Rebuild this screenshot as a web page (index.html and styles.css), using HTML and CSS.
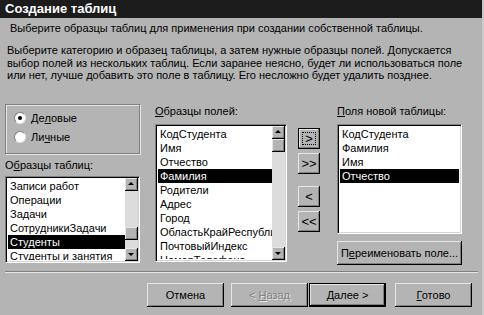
FILE: index.html
```html
<!DOCTYPE html>
<html lang="ru">
<head>
    <meta charset="UTF-8">
    <title>Создание таблиц</title>
    <link rel="stylesheet" href="styles.css">
</head>
<body>
    <div class="window">
        <div class="title">Создание таблиц</div>
        <p class="intro">Выберите образцы таблиц для применения при создании собственной таблицы.</p>
        <p class="desc">Выберите категорию и образец таблицы, а затем нужные образцы полей. Допускается выбор полей из нескольких таблиц. Если заранее неясно, будет ли использоваться поле или нет, лучше добавить это поле в таблицу. Его несложно будет удалить позднее.</p>

        <div class="main">
            <div class="col-left">
                <div class="group">
                    <div class="radio-row"><span class="radio checked"></span>Де<u>л</u>овые</div>
                    <div class="radio-row"><span class="radio"></span>Ли<u>ч</u>ные</div>
                </div>
                <div class="label label-tables">О<u>б</u>разцы таблиц:</div>
                <div class="listbox list-tables">
                    <ul class="items">
                        <li>Записи работ</li>
                        <li>Операции</li>
                        <li>Задачи</li>
                        <li>СотрудникиЗадачи</li>
                        <li class="sel">Студенты</li>
                        <li>Студенты и занятия</li>
                    </ul>
                    <div class="scroll">
                        <div class="arrow up"></div>
                        <div class="track track-tables"><div class="thumb"></div></div>
                        <div class="arrow down"></div>
                    </div>
                </div>
            </div>

            <div class="col-mid">
                <div class="label"><u>О</u>бразцы полей:</div>
                <div class="listbox list-fields">
                    <ul class="items">
                        <li>КодСтудента</li>
                        <li>Имя</li>
                        <li>Отчество</li>
                        <li class="sel">Фамилия</li>
                        <li>Родители</li>
                        <li>Адрес</li>
                        <li>Город</li>
                        <li>ОбластьКрайРеспублика</li>
                        <li>ПочтовыйИндекс</li>
                        <li>НомерТелефона</li>
                    </ul>
                    <div class="scroll">
                        <div class="arrow up"></div>
                        <div class="track track-fields"><div class="thumb"></div></div>
                        <div class="arrow down"></div>
                    </div>
                </div>
            </div>

            <div class="col-btns">
                <button class="btn small focus"><span class="focus-box">&gt;</span></button>
                <button class="btn small">&gt;&gt;</button>
                <button class="btn small gap">&lt;</button>
                <button class="btn small">&lt;&lt;</button>
            </div>

            <div class="col-right">
                <div class="label"><u>П</u>оля новой таблицы:</div>
                <div class="listbox list-new">
                    <ul class="items">
                        <li>КодСтудента</li>
                        <li>Фамилия</li>
                        <li>Имя</li>
                        <li class="sel">Отчество</li>
                    </ul>
                </div>
                <button class="btn rename">П<u>е</u>реименовать поле...</button>
            </div>
        </div>

        <div class="separator"></div>

        <div class="footer">
            <button class="btn wide">Отмена</button>
            <button class="btn wide disabled back">&lt; <u>Н</u>азад</button>
            <button class="btn wide default"><u>Д</u>алее &gt;</button>
            <button class="btn wide finish"><u>Г</u>отово</button>
        </div>
    </div>
</body>
</html>
```

FILE: styles.css
```css
body {
    margin: 0;
    padding: 0;
    background: #b4b4b4;
    font-family: "Liberation Sans", Arial, sans-serif;
    font-size: 11px;
    color: #000;
}
.window {
    width: 482px;
    height: 315px;
    background: #b4b4b4;
    border-right: 2px solid #c8c8c8;
    overflow: hidden;
}
.title {
    height: 18px;
    line-height: 18px;
    background: #1c1c1c;
    color: #fff;
    font-weight: bold;
    font-size: 13px;
    padding-left: 5px;
}
.intro {
    margin: 4px 0 0 10px;
    line-height: 13px;
}
.desc {
    margin: 9px 8px 0 7px;
    line-height: 12.5px;
    width: 460px;
}
.main {
    display: flex;
    margin-top: 17px;
    height: 166px;
}
.col-left {
    margin-left: 5px;
    width: 135px;
}
.group {
    margin-top: 5px;
    height: 44px;
    border: 1px solid #808080;
    box-shadow: 1px 1px 0 #e6e6e6, inset 1px 1px 0 #e6e6e6;
    padding-top: 4px;
}
.radio-row {
    display: flex;
    align-items: center;
    height: 19px;
    padding-left: 8px;
}
.radio {
    width: 10px;
    height: 10px;
    border-radius: 50%;
    background: #fff;
    border: 1px solid #808080;
    border-right-color: #e6e6e6;
    border-bottom-color: #e6e6e6;
    margin-right: 5px;
    position: relative;
}
.radio.checked::after {
    content: "";
    position: absolute;
    left: 3px;
    top: 3px;
    width: 4px;
    height: 4px;
    border-radius: 50%;
    background: #000;
}
.label {
    margin-top: 6px;
    height: 13px;
    line-height: 13px;
}
.label-tables {
    margin-top: 5px;
}
.listbox {
    display: flex;
    background: #fff;
    border: 1px solid #808080;
    border-right-color: #fff;
    border-bottom-color: #fff;
    box-shadow: inset 1px 1px 0 #000, inset -1px -1px 0 #d4d4d4;
    padding: 2px;
    overflow: hidden;
    box-sizing: border-box;
}
.list-tables {
    margin-top: 4px;
    height: 87px;
}
.list-fields {
    margin-top: 6px;
    height: 138px;
}
.list-new {
    margin-top: 6px;
    height: 110px;
}
.items {
    list-style: none;
    margin: 0;
    padding: 0;
    flex: 1;
    overflow: hidden;
    white-space: nowrap;
}
.items li {
    height: 14px;
    line-height: 14px;
    padding-left: 2px;
}
.items li.sel {
    background: #000;
    color: #fff;
}
.scroll {
    width: 13px;
    display: flex;
    flex-direction: column;
    margin: -1px -1px -1px 0;
}
.arrow {
    height: 13px;
    background: #b4b4b4;
    box-shadow: inset -1px -1px 0 #000, inset 1px 1px 0 #e6e6e6, inset -2px -2px 0 #808080;
    position: relative;
}
.arrow::after {
    content: "";
    position: absolute;
    left: 3px;
    border-left: 3px solid transparent;
    border-right: 3px solid transparent;
}
.arrow.up::after {
    top: 4px;
    border-bottom: 3px solid #000;
}
.arrow.down::after {
    top: 5px;
    border-top: 3px solid #000;
}
.track {
    flex: 1;
    background: #dcdcdc;
    display: flex;
    flex-direction: column;
}
.thumb {
    height: 13px;
    background: #b4b4b4;
    box-shadow: inset -1px -1px 0 #000, inset 1px 1px 0 #e6e6e6, inset -2px -2px 0 #808080;
}
.track-tables {
    justify-content: flex-end;
    padding-bottom: 8px;
}
.track-fields {
    justify-content: flex-start;
}
.col-mid {
    margin-left: 15px;
    width: 132px;
}
.col-btns {
    margin-left: 11px;
    width: 22px;
    display: flex;
    flex-direction: column;
    padding-top: 29px;
    gap: 4px;
}
.btn {
    font-family: "Liberation Sans", Arial, sans-serif;
    font-size: 11px;
    color: #000;
    background: #b4b4b4;
    border: none;
    padding: 0;
    box-shadow: inset -1px -1px 0 #000, inset 1px 1px 0 #e6e6e6, inset -2px -2px 0 #808080;
}
.btn.small {
    width: 22px;
    height: 21px;
    font-size: 13px;
}
.btn.gap {
    margin-top: 8px;
}
.btn.focus {
    border: 1px solid #000;
    box-shadow: inset -1px -1px 0 #808080, inset 1px 1px 0 #e6e6e6;
}
.focus-box {
    display: inline-block;
    border: 1px dotted #000;
    width: 12px;
    height: 11px;
    line-height: 11px;
}
.col-right {
    margin-left: 17px;
    width: 125px;
    display: flex;
    flex-direction: column;
}
.rename {
    margin-top: 7px;
    height: 24px;
}
.separator {
    margin: 6px 4px 0 5px;
    border-top: 1px solid #808080;
    border-bottom: 1px solid #e6e6e6;
}
.footer {
    display: flex;
    margin-top: 10px;
    padding-left: 147px;
}
.btn.wide {
    width: 77px;
    height: 24px;
}
.back {
    margin-left: 7px;
}
.btn.disabled {
    color: #808080;
    text-shadow: 1px 1px 0 #e6e6e6;
}
.btn.default {
    margin-left: 1px;
    border: 1px solid #000;
}
.finish {
    margin-left: 9px;
}
```
